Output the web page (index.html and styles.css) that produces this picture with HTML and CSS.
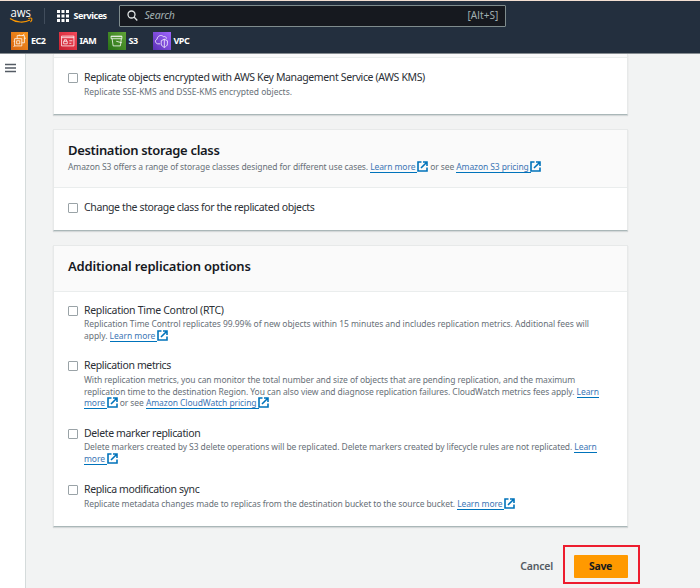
FILE: index.html
```html
<!DOCTYPE html>
<html lang="en">
<head>
<meta charset="utf-8">
<title>Replication rule</title>
<link rel="stylesheet" href="styles.css">
</head>
<body>
<svg class="defs" width="0" height="0">
  <symbol id="ext" viewBox="0 0 11 11"><path d="M4.500 1H1v9h9V6.500M6 1H10v4M9.800 1.200 4 7" fill="none" stroke="#0073bb" stroke-width="1.600"/></symbol>
</svg>
<header>
  <div class="row main-nav">
    <svg class="logo" viewBox="0 0 24 16"><text x="0.500" y="8.500" textLength="20.500" lengthAdjust="spacingAndGlyphs">aws</text><path d="M0 10.500C6 14.800 14.500 15 20 12" fill="none" stroke="#f90" stroke-width="1.200"/><path d="M18.200 10.600C20 10 21.500 10 21.800 10.600S21.500 13 20.500 14" fill="none" stroke="#f90" stroke-width="1.100"/></svg>
    <i class="divider"></i>
    <svg class="grid" viewBox="0 0 12 12"><path d="M0 0h3v3H0zM4.500 0h3v3h-3zM9 0h3v3H9zM0 4.500h3v3H0zM4.500 4.500h3v3h-3zM9 4.500h3v3H9zM0 9h3v3H0zM4.500 9h3v3h-3zM9 9h3v3H9z" fill="#fff"/></svg>
    <b class="services">Services</b>
    <div class="search"><svg viewBox="0 0 11 11"><circle cx="4.500" cy="4.500" r="3.500"/><path d="m7 7 3.300 3.500"/></svg><em>Search</em><span class="key">[Alt+S]</span></div>
  </div>
  <nav class="row shortcuts">
    <a class="ec2"><svg viewBox="0 0 17 17"><path d="M3.500 6.500h7v7h-7zM6 6.500V3.500h7v7h-2.500M5.500 8.500h3v3h-3zM8 3.500V2.500M11 3.500l2-1.500M13 6h1.500M3.500 9h-1M2.500 14.500l1-1"/></svg><b>EC2</b></a>
    <a class="iam"><svg viewBox="0 0 17 17"><path d="M2.500 4h12v9.500h-12zM2.500 5.500h12M4.500 9h3.500v2.500H4.500zM5.200 9V7.500h2V9M10 8.500h3M10 11h2"/></svg><b>IAM</b></a>
    <a class="s3"><svg viewBox="0 0 17 17"><path d="M3 4.500h10.500M3 4v2.500h10.500V4zM4 6.500 5 13.500h7l1-7M8 9l5.500 1.500"/></svg><b>S3</b></a>
    <a class="vpc"><svg viewBox="0 0 17 17"><path d="M7 11.500H4.500C1.500 10.500 2 7.500 4 7c0-3 4-5 6-2.500 2-.5 3 .5 3 2M8 8.500l3-1.500 3 1.500v3c0 2-1.500 2.500-3 3.500-1.500-1-3-1.500-3-3.500zM11 7v8"/></svg><b>VPC</b></a>
  </nav>
</header>
<div class="body">
  <aside><svg viewBox="0 0 11 9"><path d="M0 1h11M0 4.500h11M0 8h11" stroke="#545b64" stroke-width="1.400"/></svg></aside>
  <main>
    <section class="card kms">
      <div class="head"></div>
      <div class="option"><i class="box"></i><div>
        <h3>Replicate objects encrypted with AWS Key Management Service (AWS KMS)</h3>
        <p class="d1">Replicate SSE-KMS and DSSE-KMS encrypted objects.</p></div></div>
    </section>
    <section class="card storage">
      <div class="head"><h2>Destination storage class</h2>
        <p class="d2">Amazon S3 offers a range of storage classes designed for different use cases. <a>Learn more </a><svg><use href="#ext"/></svg> or see <a>Amazon S3 pricing </a><svg><use href="#ext"/></svg></p></div>
      <div class="option"><i class="box"></i><div><h3>Change the storage class for the replicated objects</h3></div></div>
    </section>
    <section class="card extra">
      <div class="head"><h2 class="t2">Additional replication options</h2></div>
      <div class="option rtc"><i class="box"></i><div>
        <h3 class="l3">Replication Time Control (RTC)</h3>
        <p class="d3">Replication Time Control replicates 99.99% of new objects within 15 minutes and includes replication metrics. Additional fees will<br>apply. <a>Learn more </a><svg><use href="#ext"/></svg></p></div></div>
      <div class="option metrics"><i class="box"></i><div>
        <h3>Replication metrics</h3>
        <p class="d4">With replication metrics, you can monitor the total number and size of objects that are pending replication, and the maximum<br>replication time to the destination Region. You can also view and diagnose replication failures. CloudWatch metrics fees apply. <a>Learn</a><br><a>more </a><svg><use href="#ext"/></svg> or see <a>Amazon CloudWatch pricing </a><svg><use href="#ext"/></svg></p></div></div>
      <div class="option marker"><i class="box"></i><div>
        <h3>Delete marker replication</h3>
        <p class="d5">Delete markers created by S3 delete operations will be replicated. Delete markers created by lifecycle rules are not replicated. <a>Learn</a><br><a>more </a><svg><use href="#ext"/></svg></p></div></div>
      <div class="option sync"><i class="box"></i><div>
        <h3>Replica modification sync</h3>
        <p class="d6">Replicate metadata changes made to replicas from the destination bucket to the source bucket. <a>Learn more </a><svg><use href="#ext"/></svg></p></div></div>
    </section>
    <div class="actions"><b class="cancel">Cancel</b><div class="highlight"><button>Save</button></div></div>
  </main>
</div>
</body>
</html>
```
FILE: styles.css
```css
* { box-sizing: border-box; }
body { margin: 0; width: 700px; height: 588px; overflow: hidden; font-family: "Noto Sans", sans-serif; color: #16191f; background: #f2f3f3; }
h2, h3, p { margin: 0; white-space: nowrap; }
.defs { display: block; }
header { height: 54px; background: #232f3e; border-top: 1px solid #f3dfd2; border-bottom: 1px solid #858b90; color: #fff; }
.row { display: flex; align-items: center; }
.main-nav { height: 29px; padding-left: 9.500px; }
.logo { width: 24px; height: 16px; overflow: visible; }
.logo text { font: 400 12px "Open Sans", sans-serif; fill: #fff; }
.divider { width: 1px; height: 16px; background: #414d5c; margin: 0 12px 0 10px; }
.grid { width: 12px; height: 12px; margin-right: 5px; }
.services { width: 45px; font-size: 9px; letter-spacing: -.45px; margin-top: -1px; }
.search { width: 387px; height: 22px; border: 1px solid #7f8c8d; border-radius: 1px; background: #16191f; display: flex; align-items: center; padding: 0 6px 1px 7px; color: #a2b0b1; font-size: 10.500px; letter-spacing: -.2px; }
.search svg { width: 11px; height: 11px; margin-right: 7px; fill: none; stroke: #e0e4e4; stroke-width: 1.300; }
.key { margin-left: auto; font-size: 10px; letter-spacing: .1px; }
.shortcuts { height: 22px; padding-left: 10.500px; }
.shortcuts a { display: flex; align-items: center; gap: 3px; font-size: 9px; letter-spacing: -.5px; }
.shortcuts b { margin-top: -1px; }
.shortcuts svg { width: 17.500px; height: 17.500px; fill: none; stroke: #fff; stroke-width: .75; }
.ec2 { width: 48.500px; } .iam { width: 49px; } .s3 { width: 45px; }
.ec2 svg { background: linear-gradient(45deg, #d86613, #f7941d); } .iam svg { background: linear-gradient(45deg, #c8202f, #f5495a); } .s3 svg { background: linear-gradient(45deg, #277116, #60a337); } .vpc svg { background: linear-gradient(45deg, #5a30b5, #a166ff); }
.body { display: flex; height: 534px; }
aside { width: 26px; background: #fff; border-right: 1px solid #d5dbdb; padding: 9px 0 0 5px; }
aside svg { display: block; width: 11px; height: 10px; }
main { flex: 1; padding-left: 27px; }
.card { width: 575px; background: #fff; border: 1px solid #e7e9e9; border-bottom-color: #aab7b8; box-shadow: 0 1px 1px rgba(0, 28, 36, .12); margin-bottom: 14px; }
.head { background: #fafafa; border-bottom: 1px solid #eaeded; padding-left: 14px; }
.kms { height: 61px; border-top: 0; }
.kms .head { height: 4px; }
.storage { height: 102px; }
.storage .head { height: 58px; padding-top: 11px; }
.extra { height: 282px; }
.extra .head { height: 46px; padding-top: 11px; }
h2 { font-size: 13px; line-height: 18px; font-weight: 600; letter-spacing: -.32px; }
.t2 { letter-spacing: -.17px; }
h3 { font-size: 10.500px; line-height: 14px; font-weight: 400; letter-spacing: -.37px; color: #2b3036; }
.l3 { letter-spacing: -.3px; }
p { font-size: 8.500px; line-height: 11.500px; color: #687078; letter-spacing: -.1px; }
.d1 { letter-spacing: -.02px; }
.d2 { letter-spacing: -.1px; }
.d3 { letter-spacing: -.05px; }
.d4, .d5 { letter-spacing: -.085px; }
.head p { margin-top: 2px; }
.option { display: flex; gap: 6px; padding-left: 14px; }
.box { width: 10px; height: 10px; border: 1px solid #9aa3a7; border-radius: 1px; margin-top: 3px; background: #fff; }
.kms .option { padding-top: 12px; }
.kms p { margin-top: 2px; }
.storage .option { padding-top: 12px; }
.rtc { padding-top: 11px; height: 66px; }
.metrics { height: 68px; }
.marker { height: 56px; }
.metrics p, .sync p { margin-top: 2px; }
.rtc p, .marker p { margin-top: 1px; }
p a { color: #3d76b5; border-bottom: 1px solid #0073bb; white-space: pre; }
p svg { width: 11px; height: 11px; vertical-align: -2px; margin-left: -.4px; }
.actions { display: flex; align-items: center; justify-content: flex-end; padding-right: 60px; margin-top: 18px; }
.cancel { color: #545b64; font-size: 10.500px; font-weight: 600; letter-spacing: -.2px; margin: 2px 10px 0 0; }
.highlight { width: 77px; height: 39px; border: 2px solid #ed1c2e; display: flex; align-items: center; justify-content: center; padding: 3px 2px 0 0; }
button { width: 54px; height: 23px; padding: 0; border: 0; border-radius: 1px; background: #f90; color: #16191f; font: 700 10.500px "Noto Sans", sans-serif; letter-spacing: -.3px; }
```
